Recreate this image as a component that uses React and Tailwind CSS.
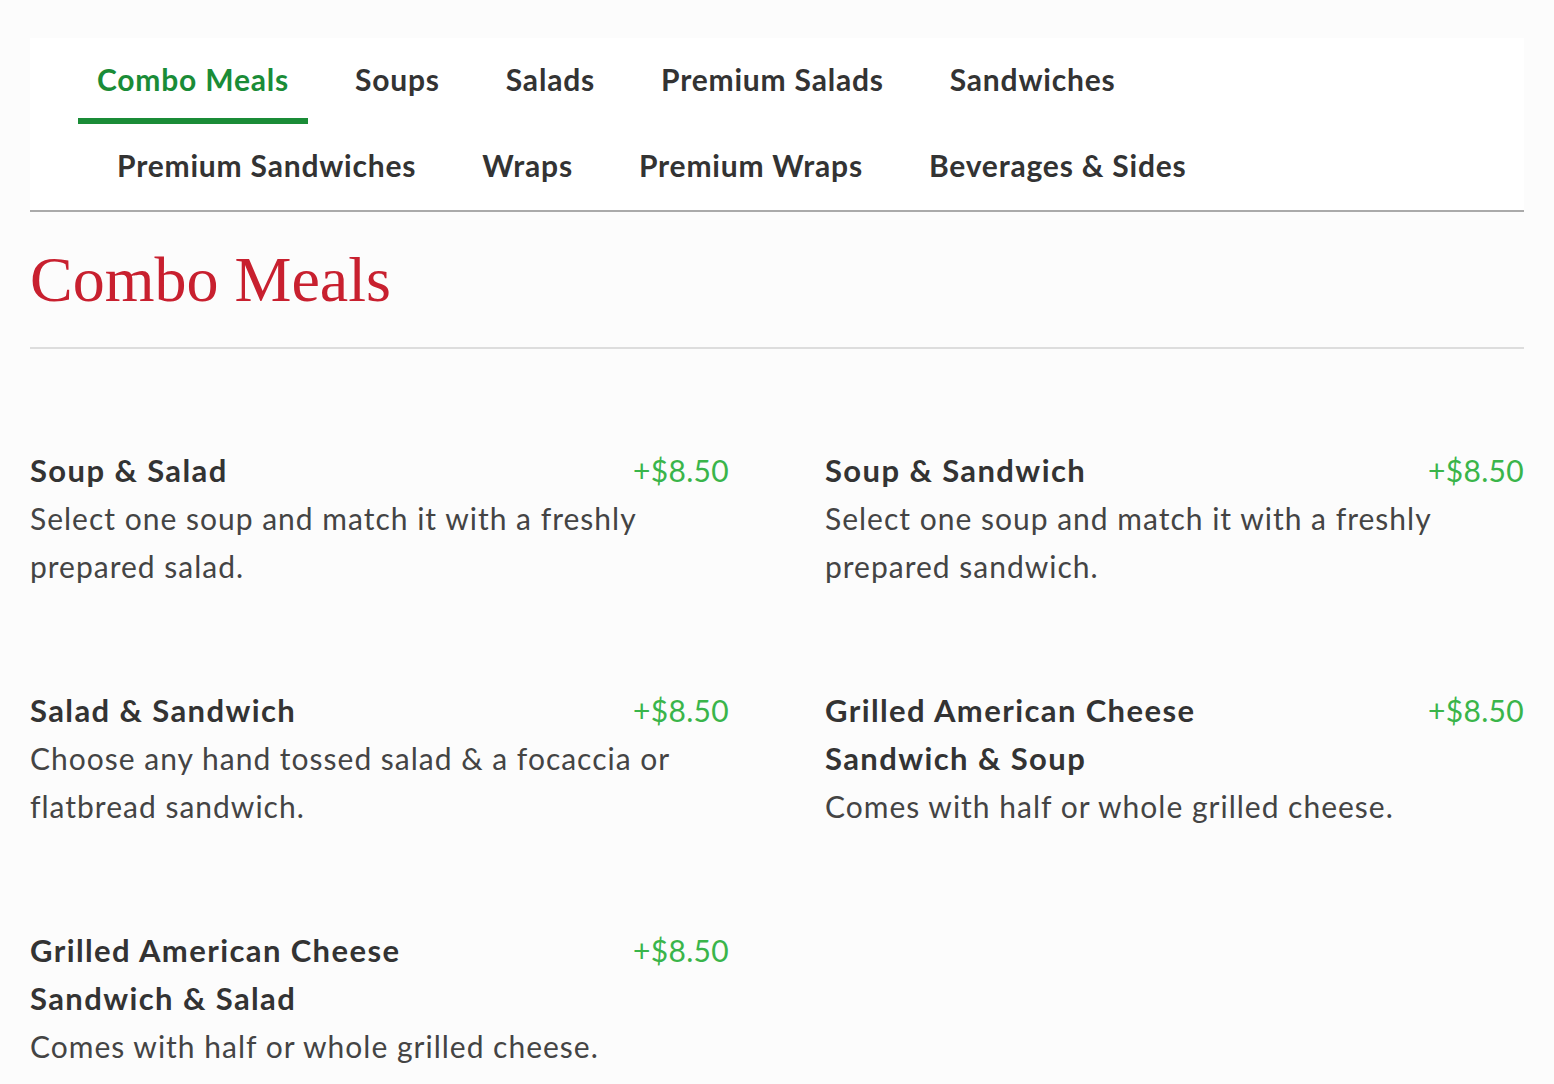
import React from "react";

const row1 = ["Combo Meals", "Soups", "Salads", "Premium Salads", "Sandwiches"];
const row2 = ["Premium Sandwiches", "Wraps", "Premium Wraps", "Beverages & Sides"];

const items = [
  { t: "Soup & Salad", d: "Select one soup and match it with a freshly prepared salad." },
  { t: "Soup & Sandwich", d: "Select one soup and match it with a freshly prepared sandwich." },
  { t: "Salad & Sandwich", d: "Choose any hand tossed salad & a focaccia or flatbread sandwich." },
  { t: "Grilled American Cheese Sandwich & Soup", d: "Comes with half or whole grilled cheese." },
  { t: "Grilled American Cheese Sandwich & Salad", d: "Comes with half or whole grilled cheese." },
];

function Tab({ label, active }) {
  return (
    <div
      className={
        "px-[19px] pt-[23px] pb-[21px] border-b-[6px] leading-[36px] text-[30px] tracking-[0.8px] font-bold whitespace-nowrap " +
        (active ? "border-[#1a8c37] text-[#1a8c37]" : "border-transparent text-[#333333]")
      }
    >
      {label}
    </div>
  );
}

export default function App() {
  return (
    <div
      className="min-h-screen bg-[#fcfcfc] px-[30px] pt-[38px] pb-[20px] text-[#333333]"
      style={{ fontFamily: "Lato, 'Noto Sans', sans-serif" }}
    >
      <div className="bg-white border-b-2 border-[#aaaaaa]">
        <div className="flex gap-[28px] pl-[48px]">
          {row1.map((l, i) => (
            <Tab key={l} label={l} active={i === 0} />
          ))}
        </div>
        <div className="flex gap-[28px] pl-[68px]">
          {row2.map((l) => (
            <Tab key={l} label={l} />
          ))}
        </div>
      </div>

      <h1
        className="mt-[30px] text-[64px] leading-[1.2] text-[#c8202f]"
        style={{ fontFamily: "'Liberation Serif', 'Times New Roman', serif" }}
      >
        Combo Meals
      </h1>
      <div className="mt-[28px] h-[2px] bg-[#dddddd]" />

      <div className="grid grid-cols-2 gap-x-[96px] gap-y-[96px] pt-[97px]">
        {items.map((it) => (
          <div key={it.t}>
            <div className="flex justify-between items-start">
              <div className="w-[60%] text-[31px] leading-[48px] tracking-[1.4px] font-bold text-[#333333]">{it.t}</div>
              <div className="text-[30px] leading-[48px] tracking-[0.3px] text-[#3ab54a]">+$8.50</div>
            </div>
            <p className="text-[30px] leading-[48px] tracking-[1px] text-[#444444]">{it.d}</p>
          </div>
        ))}
      </div>
    </div>
  );
}
